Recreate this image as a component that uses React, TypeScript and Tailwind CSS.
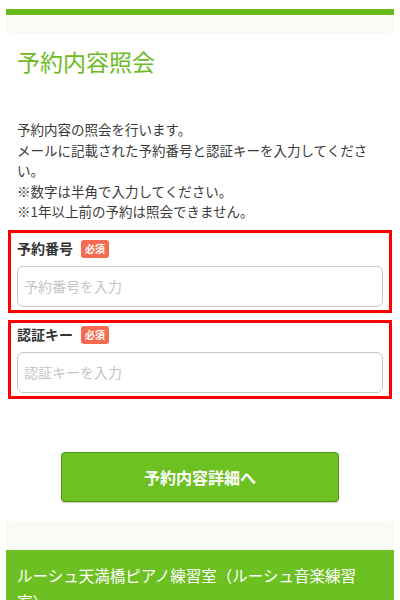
import React from "react";

const FONT = { fontFamily: '"Noto Sans CJK JP", "Noto Sans", sans-serif' };

function Field({ label, placeholder, top }: { label: string; placeholder: string; top: string }) {
  return (
    <div className={`mx-[2px] border-[3px] border-[#ff0000] px-[6px] pb-[3px] ${top}`}>
      <div className="flex h-[22px] items-center gap-[8px]">
        <span className="text-[14px] font-bold text-[#333]">{label}</span>
        <span className="rounded-[3px] bg-[#f46b51] px-[4px] text-[10px] leading-[18px] font-bold text-white">必須</span>
      </div>
      <input
        type="text"
        placeholder={placeholder}
        className="mt-[6px] h-[41px] w-full rounded-[6px] border border-[#c8c8c8] bg-white px-[6px] text-[14px] placeholder:text-[#c4c4c4] outline-none"
      />
    </div>
  );
}

export default function App() {
  return (
    <div className="min-h-[600px] bg-white" style={FONT}>
      <div className="mx-[6px] pt-[9px]">
        <div className="h-[6px] bg-[#67bb1d]" />
        <div className="bg-[#f9fbf4] pt-[19px] pb-[28px]">
          <div className="rounded-[5px] bg-white pb-[20px]">
            <h1 className="pl-[11px] pt-[12px] text-[23px] leading-[30px] text-[#6cbb21]">予約内容照会</h1>
            <div className="mt-[43px] px-[11px] text-[13.5px] leading-[20.5px] text-[#3a3a3a]">
              <p>予約内容の照会を行います。</p>
              <p>メールに記載された予約番号と認証キーを入力してください。</p>
              <p>※数字は半角で入力してください。</p>
              <p>※1年以上前の予約は照会できません。</p>
            </div>
            <div className="mt-[8px] flex flex-col gap-[7px]">
              <Field label="予約番号" placeholder="予約番号を入力" top="pt-[5px]" />
              <Field label="認証キー" placeholder="認証キーを入力" top="pt-[1px]" />
            </div>
            <div className="mt-[53px] flex justify-center">
              <button
                type="button"
                className="h-[50px] w-[278px] rounded-[4px] border border-[#4f9216] bg-[#6ec122] text-[16px] font-bold text-white shadow-[0_1px_1px_rgba(0,0,0,0.2)]"
              >
                予約内容詳細へ
              </button>
            </div>
          </div>
        </div>
        <div className="bg-[#6dc022] px-[11px] pt-[12px] pb-[10px] text-[15.5px] leading-[26px] text-white">
          ルーシュ天満橋ピアノ練習室（ルーシュ音楽練習
          <br />
          室）
        </div>
      </div>
    </div>
  );
}
